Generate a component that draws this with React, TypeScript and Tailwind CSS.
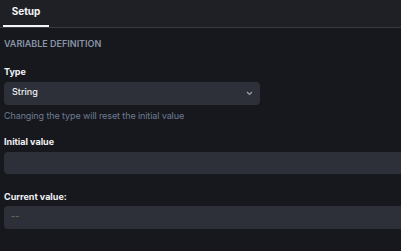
const FieldLabel = ({ children, className = '' }: { children: React.ReactNode; className?: string }) => (
  <div className={`text-[9px] font-bold leading-[12px] text-[#f1f2f5] ${className}`}>{children}</div>
)

const App = () => {
  return (
    <div className="h-[251px] w-[401px] overflow-hidden bg-[#17181d] font-['Inter',sans-serif]">
      <div className="flex h-[28px] border-b border-[#383a43] bg-[#1f2026]">
        <div className="ml-[3px] flex w-[46px] justify-center border-b-2 border-[#f4f4f6] pt-[5px] text-[10px] font-bold leading-[12px] text-[#f4f5f7]">
          Setup
        </div>
      </div>

      <div className="flex flex-col px-[4px]">
        <div className="mt-[10px] text-[9px] font-semibold uppercase leading-[11px] text-[#8a93a6]">
          Variable definition
        </div>

        <FieldLabel className="mt-[17px]">Type</FieldLabel>
        <div className="mt-[4px] flex h-[23px] w-[256px] items-start justify-between rounded-[4px] bg-[#2d3039] pl-[8px] pr-[7px] pt-[4px] text-[9px] font-medium leading-[12px] text-[#eef0f4]">
          <span>String</span>
          <svg width="7" height="5" viewBox="0 0 7 5" className="mt-[5px]">
            <path d="M1 1 L3.5 3.5 L6 1" fill="none" stroke="#9ba1af" strokeWidth="1.2" />
          </svg>
        </div>
        <div className="mt-[5px] text-[9px] leading-[12px] tracking-[-0.1px] text-[#6c7b94]">
          Changing the type will reset the initial value
        </div>

        <FieldLabel className="mt-[14px]">Initial value</FieldLabel>
        <div className="mt-[4px] h-[22px] w-[420px] rounded-[4px] bg-[#2d3039]" />

        <FieldLabel className="mt-[17px]">Current value:</FieldLabel>
        <div className="mt-[3px] flex h-[23px] w-[420px] items-start rounded-[4px] bg-[#2d3039] pl-[7px] pt-[4px] text-[9px] font-bold leading-[12px] text-[#5f6855]">
          --
        </div>
      </div>
    </div>
  )
}

export default App
